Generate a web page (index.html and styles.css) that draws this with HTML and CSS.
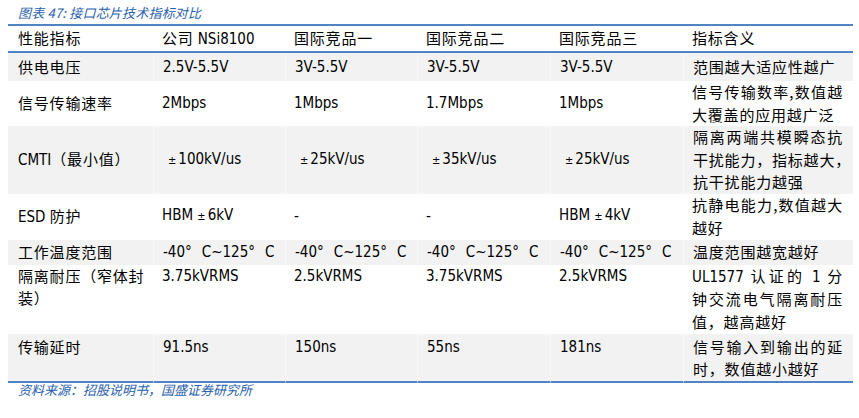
FILE: index.html
```html
<!DOCTYPE html>
<html lang="zh-CN">
<head>
<meta charset="utf-8">
<title>接口芯片技术指标对比</title>
<link rel="stylesheet" href="styles.css">
</head>
<body>
<div class="page">
  <div class="caption">图表 47: 接口芯片技术指标对比</div>
  <table class="cmp">
    <colgroup>
      <col class="c1"><col class="c2"><col class="c3"><col class="c4"><col class="c5"><col class="c6">
    </colgroup>
    <thead>
      <tr class="rh">
        <th class="cn">性能指标</th>
        <th class="cn">公司 <span class="lat">NSi8100</span></th>
        <th class="cn">国际竞品一</th>
        <th class="cn">国际竞品二</th>
        <th class="cn">国际竞品三</th>
        <th class="cn">指标含义</th>
      </tr>
    </thead>
    <tbody>
      <tr class="r1 gray">
        <td class="cn">供电电压</td>
        <td>2.5V-5.5V</td>
        <td>3V-5.5V</td>
        <td>3V-5.5V</td>
        <td>3V-5.5V</td>
        <td class="cn desc"><span class="ln">范围越大适应性越广</span></td>
      </tr>
      <tr class="r2">
        <td class="cn">信号传输速率</td>
        <td>2Mbps</td>
        <td>1Mbps</td>
        <td>1.7Mbps</td>
        <td>1Mbps</td>
        <td class="cn desc"><span class="ln j">信号传输数率,数值越</span><span class="ln">大覆盖的应用越广泛</span></td>
      </tr>
      <tr class="r3 gray">
        <td class="cn"><span class="lat">CMTI</span>（最小值）</td>
        <td><span class="pm">±</span>100kV/us</td>
        <td><span class="pm">±</span>25kV/us</td>
        <td><span class="pm">±</span>35kV/us</td>
        <td><span class="pm">±</span>25kV/us</td>
        <td class="cn desc"><span class="ln j">隔离两端共模瞬态抗</span><span class="ln j">干扰能力，指标越大，</span><span class="ln">抗干扰能力越强</span></td>
      </tr>
      <tr class="r4">
        <td class="cn"><span class="lat">ESD</span> 防护</td>
        <td>HBM <span class="pm2">±</span>6kV</td>
        <td>-</td>
        <td>-</td>
        <td>HBM <span class="pm2">±</span>4kV</td>
        <td class="cn desc"><span class="ln j">抗静电能力,数值越大</span><span class="ln">越好</span></td>
      </tr>
      <tr class="r5 gray">
        <td class="cn">工作温度范围</td>
        <td>-40°<span class="deg"></span>C~125°<span class="deg"></span>C</td>
        <td>-40°<span class="deg"></span>C~125°<span class="deg"></span>C</td>
        <td>-40°<span class="deg"></span>C~125°<span class="deg"></span>C</td>
        <td>-40°<span class="deg"></span>C~125°<span class="deg"></span>C</td>
        <td class="cn desc"><span class="ln">温度范围越宽越好</span></td>
      </tr>
      <tr class="r6 top">
        <td class="cn"><span class="ln">隔离耐压（窄体封</span><span class="ln">装）</span></td>
        <td>3.75kVRMS</td>
        <td>2.5kVRMS</td>
        <td>3.75kVRMS</td>
        <td>2.5kVRMS</td>
        <td class="cn desc"><span class="ln j"><span class="lat">UL1577</span> 认证的 <span class="lat">1</span> 分</span><span class="ln j">钟交流电气隔离耐压</span><span class="ln">值，越高越好</span></td>
      </tr>
      <tr class="r7 gray top last">
        <td class="cn">传输延时</td>
        <td>91.5ns</td>
        <td>150ns</td>
        <td>55ns</td>
        <td>181ns</td>
        <td class="cn desc"><span class="ln j">信号输入到输出的延</span><span class="ln">时，数值越小越好</span></td>
      </tr>
    </tbody>
  </table>
  <div class="source">资料来源：招股说明书，国盛证券研究所</div>
</div>
</body>
</html>
```

FILE: styles.css
```css
html, body {
  margin: 0;
  padding: 0;
  background: #ffffff;
}

.page {
  width: 845px;
  padding-left: 8px;
  font-family: "DejaVu Sans Condensed", "DejaVu Sans", "Noto Sans CJK SC", sans-serif;
  font-stretch: semi-condensed;
  color: #000000;
}

.caption {
  height: 23px;
  padding-top: 1px;
  padding-left: 10px;
  line-height: 23px;
  font-family: "Noto Sans CJK SC", sans-serif;
  font-size: 13px;
  font-style: italic;
  letter-spacing: 0.2px;
  color: #2a62ad;
}

.cmp {
  width: 845px;
  table-layout: fixed;
  border-collapse: separate;
  border-spacing: 0;
  font-size: 15px;
  line-height: 22.5px;
}

.c1 { width: 145px; }
.c2 { width: 132px; }
.c3 { width: 132px; }
.c4 { width: 133px; }
.c5 { width: 133px; }
.c6 { width: 170px; }

.cmp th,
.cmp td {
  padding: 0 10px 0 9px;
  text-align: left;
  vertical-align: middle;
  font-weight: normal;
  white-space: nowrap;
}

.cmp th:first-child,
.cmp td:first-child {
  padding-left: 10px;
}

.cmp thead th {
  border-top: 2px solid #5283c2;
  border-bottom: 2px solid #5283c2;
}

.cn {
  font-family: "Noto Sans CJK SC", sans-serif;
  letter-spacing: 0.8px;
}

.lat {
  font-family: "DejaVu Sans Condensed", "DejaVu Sans", sans-serif;
  letter-spacing: 0;
}

.rh { height: 29px; }
.r1 { height: 28px; }
.r2 { height: 45px; }
.r3 { height: 67px; }
.r4 { height: 46px; }
.r5 { height: 25px; }
.r6 { height: 69px; }
.r7 { height: 47px; }

.gray td {
  background: #f2f2f2;
}

.gray td + td {
  border-left: 1px solid #f8f8f8;
}

.top td {
  vertical-align: top;
}

.r7 td {
  padding-top: 2px;
}

.last td {
  border-bottom: 2px solid #5283c2;
}

.desc {
  padding-right: 11px;
}

.ln {
  display: block;
}

.ln.j {
  text-align: justify;
  text-align-last: justify;
}

.pm {
  font-size: 11px;
  margin-left: 5px;
  margin-right: 2px;
}

.pm2 {
  font-size: 11px;
  margin-right: 2px;
}

.deg {
  display: inline-block;
  width: 10px;
}

.source {
  padding-left: 10px;
  height: 18px;
  line-height: 13px;
  font-family: "Noto Sans CJK SC", sans-serif;
  font-size: 13px;
  font-style: italic;
  letter-spacing: 0;
  color: #2a62ad;
}
```
